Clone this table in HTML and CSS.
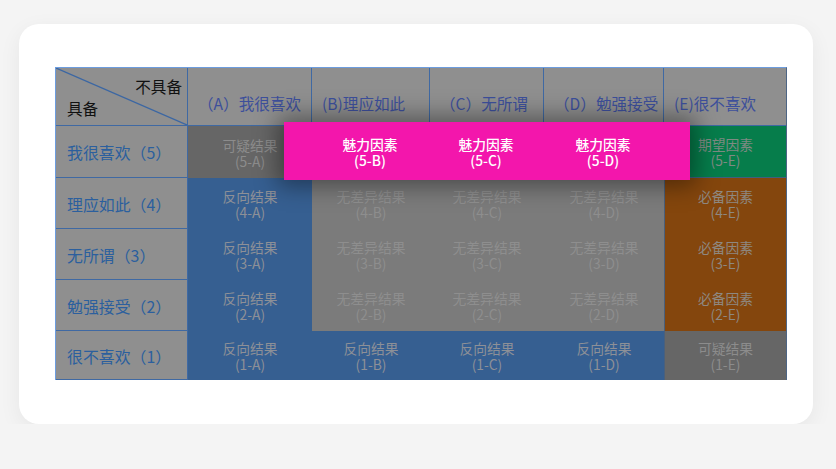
FILE: index.html
```html
<!DOCTYPE html>
<html lang="zh">
<head>
<meta charset="utf-8">
<link rel="stylesheet" href="styles.css">
</head>
<body>
<div class="card">
  <div class="matrix">
    <div class="grid">
      <div class="hd corner">
        <svg class="diag" viewBox="0 0 132 58" preserveAspectRatio="none"><line x1="0" y1="0" x2="132" y2="58" stroke="#3c67a3" stroke-width="1.3"/></svg>
        <span class="c-top">不具备</span>
        <span class="c-bot">具备</span>
      </div>
      <div class="hd col">（A）我很喜欢</div>
      <div class="hd col">(B)理应如此</div>
      <div class="hd col">（C）无所谓</div>
      <div class="hd col">（D）勉强接受</div>
      <div class="hd col last">(E)很不喜欢</div>

      <div class="hd row">我很喜欢（5）</div>
      <div class="cell dark"><span>可疑结果</span><span>(5-A)</span></div>
      <div class="cell mid"></div>
      <div class="cell mid"></div>
      <div class="cell mid"></div>
      <div class="cell green e"><span>期望因素</span><span>(5-E)</span></div>

      <div class="hd row">理应如此（4）</div>
      <div class="cell blue"><span>反向结果</span><span>(4-A)</span></div>
      <div class="cell mid"><span>无差异结果</span><span>(4-B)</span></div>
      <div class="cell mid"><span>无差异结果</span><span>(4-C)</span></div>
      <div class="cell mid"><span>无差异结果</span><span>(4-D)</span></div>
      <div class="cell orange e"><span>必备因素</span><span>(4-E)</span></div>

      <div class="hd row">无所谓（3）</div>
      <div class="cell blue"><span>反向结果</span><span>(3-A)</span></div>
      <div class="cell mid"><span>无差异结果</span><span>(3-B)</span></div>
      <div class="cell mid"><span>无差异结果</span><span>(3-C)</span></div>
      <div class="cell mid"><span>无差异结果</span><span>(3-D)</span></div>
      <div class="cell orange e"><span>必备因素</span><span>(3-E)</span></div>

      <div class="hd row">勉强接受（2）</div>
      <div class="cell blue"><span>反向结果</span><span>(2-A)</span></div>
      <div class="cell mid"><span>无差异结果</span><span>(2-B)</span></div>
      <div class="cell mid"><span>无差异结果</span><span>(2-C)</span></div>
      <div class="cell mid"><span>无差异结果</span><span>(2-D)</span></div>
      <div class="cell orange e"><span>必备因素</span><span>(2-E)</span></div>

      <div class="hd row">很不喜欢（1）</div>
      <div class="cell blue"><span>反向结果</span><span>(1-A)</span></div>
      <div class="cell blue"><span>反向结果</span><span>(1-B)</span></div>
      <div class="cell blue"><span>反向结果</span><span>(1-C)</span></div>
      <div class="cell blue"><span>反向结果</span><span>(1-D)</span></div>
      <div class="cell dark e"><span>可疑结果</span><span>(1-E)</span></div>
    </div>

    <div class="highlight">
      <div></div>
      <div class="hl"><span>魅力因素</span><span>(5-B)</span></div>
      <div class="hl"><span>魅力因素</span><span>(5-C)</span></div>
      <div class="hl"><span>魅力因素</span><span>(5-D)</span></div>
      <div></div>
    </div>
  </div>
</div>
</body>
</html>
```

FILE: styles.css
```css
* { box-sizing: border-box; }
html, body { margin: 0; padding: 0; }
body {
  background: #f4f4f4;
  padding: 24px 23px 0 19px;
  font-family: "Noto Sans CJK SC", "Noto Sans", sans-serif;
}
.card {
  background: #ffffff;
  border-radius: 20px;
  height: 400px;
  padding: 43px 26px 0 36px;
  box-shadow: 0 6px 22px rgba(0, 0, 0, 0.06);
}
.matrix {
  position: relative;
  width: 732px;
}
.grid {
  display: grid;
  grid-template-columns: 132px 124px 118px 114px 120px 122px;
  grid-template-rows: 58px 52px 51px 51px 51px 49px;
  border-top: 1px solid #6d9ddf;
  border-left: 1px solid #6d9ddf;
  border-right: 1px solid #4d6585;
  background: #7b7b7b;
}
.hd {
  background: #8f8f8f;
  border-right: 1px solid #3f69a3;
  border-bottom: 1px solid #3f69a3;
  display: flex;
  align-items: center;
  font-size: 15.6px;
}
.hd.last { border-right: none; }
.col {
  color: #3d4f9b;
  padding-left: 10px;
  padding-top: 12px;
}
.row {
  color: #2b5f9e;
  padding-left: 11px;
  padding-top: 2px;
  font-size: 15.9px;
}
.corner {
  position: relative;
  color: #111;
}
.diag {
  position: absolute;
  left: 0; top: 0;
  width: 100%; height: 100%;
}
.c-top {
  position: absolute;
  right: 5px;
  top: 7px;
}
.c-bot {
  position: absolute;
  left: 11px;
  top: 29px;
}
.cell, .hl {
  display: flex;
  flex-direction: column;
  align-items: center;
  justify-content: center;
  text-align: center;
  font-size: 13.8px;
  line-height: 16px;
  padding-top: 1px;
}
.cell span, .hl span {
  display: block;
  height: 16px;
  line-height: 16px;
}
.dark { background: #666666; color: #8c8c8c; }
.mid { background: #7b7b7b; color: #8e8e8e; }
.blue { background: #365f91; color: #8d9097; }
.green { background: #067d4b; color: #7f8a83; }
.orange { background: #84460d; color: #8e8880; }
.e { border-left: 1px solid #4a607c; }
.green.e { border-bottom: 1px solid #3f5f80; }
.highlight {
  position: absolute;
  left: 229px;
  top: 55px;
  width: 406px;
  height: 58px;
  background: #f316ac;
  display: grid;
  grid-template-columns: 27px 118px 114px 120px 27px;
  box-shadow: 0 0 22px 6px rgba(0, 0, 0, 0.4);
}
.hl {
  color: #ffffff;
  font-weight: 500;
}
```
